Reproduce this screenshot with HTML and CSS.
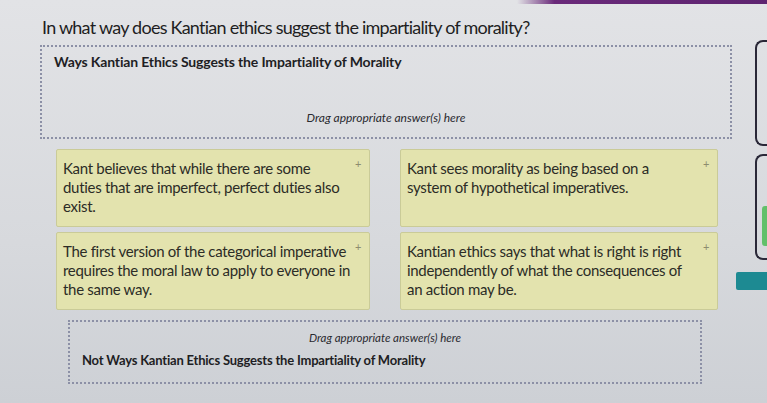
FILE: index.html
```html
<!DOCTYPE html>
<html lang="en">
<head>
  <meta charset="UTF-8" />
  <meta name="viewport" content="width=device-width, initial-scale=1.0"/>
  <title>Kantian Ethics - Sort</title>
  <link rel="stylesheet" href="styles.css">
</head>
<body>
<div class="topbar"></div>

<div class="layout">
  <div class="main">
    <h1>In what way does Kantian ethics suggest the impartiality of morality?</h1>

    <div class="drop drop-top">
      <div class="drop-label">Ways Kantian Ethics Suggests the Impartiality of Morality</div>
      <div class="drop-hint">Drag appropriate answer(s) here</div>
    </div>

    <div class="cards">
      <div class="card">Kant believes that while there are some<br>duties that are imperfect, perfect duties also<br>exist.<span class="plus">+</span></div>
      <div class="card">Kant sees morality as being based on a<br>system of hypothetical imperatives.<span class="plus">+</span></div>
      <div class="card">The first version of the categorical imperative<br>requires the moral law to apply to everyone in<br>the same way.<span class="plus">+</span></div>
      <div class="card">Kantian ethics says that what is right is right<br>independently of what the consequences of<br>an action may be.<span class="plus">+</span></div>
    </div>

    <div class="drop drop-bottom">
      <div class="drop-hint">Drag appropriate answer(s) here</div>
      <div class="drop-label">Not Ways Kantian Ethics Suggests the Impartiality of Morality</div>
    </div>
  </div>

  <div class="side">
    <div class="side-box"></div>
    <div class="side-box"><div class="side-green"></div></div>
    <div class="side-btn"></div>
  </div>
</div>
</body>
</html>
```

FILE: styles.css
```css
body {
  margin: 0;
  font-family: Lato, 'Open Sans', sans-serif;
  background: linear-gradient(180deg, #e2e3e6 0%, #d7d9dd 60%, #cdd0d5 100%);
  color: #222;
  height: 403px;
  overflow: hidden;
}
.topbar {
  position: absolute;
  top: 0;
  right: 0;
  width: 250px;
  height: 4px;
  background: linear-gradient(90deg, rgba(106, 42, 122, 0) 0%, #6a2a7a 15%, #5e2470 100%);
}
.layout {
  display: flex;
}
.main {
  width: 736px;
  padding-left: 40px;
  box-sizing: border-box;
}
h1 {
  font-size: 18px;
  font-weight: 400;
  letter-spacing: -0.75px;
  margin: 16px 0 0 2px;
  color: #1e1e22;
}
.drop {
  border: 2px dotted #8c90a6;
  box-sizing: border-box;
  display: flex;
  flex-direction: column;
}
.drop-top {
  height: 94px;
  width: 692px;
  margin-top: 7px;
  padding: 6px 12px;
}
.drop-top .drop-hint {
  margin-top: auto;
  margin-bottom: 6px;
}
.drop-label {
  font-weight: 700;
  font-size: 14px;
  letter-spacing: -0.15px;
  color: #1e1e24;
}
.drop-hint {
  text-align: center;
  font-style: italic;
  font-size: 12px;
  color: #2a2a30;
}
.drop-bottom .drop-label {
  font-size: 13px;
  letter-spacing: -0.2px;
}
.drop-bottom .drop-hint {
  font-size: 11.5px;
}
.cards {
  display: grid;
  grid-template-columns: 314px 318px;
  column-gap: 30px;
  row-gap: 5px;
  margin: 10px 0 0 16px;
}
.card {
  position: relative;
  background: #e3e3ae;
  border: 1px solid #cacb98;
  border-radius: 2px;
  padding: 9px 8px 10px 6px;
  font-size: 15px;
  line-height: 19px;
  letter-spacing: -0.3px;
  color: #2c2c26;
  min-height: 57px;
}
.plus {
  position: absolute;
  top: 4px;
  right: 8px;
  font-size: 11px;
  color: #8d8c6e;
}
.drop-bottom {
  width: 634px;
  height: 64px;
  margin: 10px 0 0 28px;
  padding: 9px 12px 6px;
  gap: 8px;
}
.side {
  display: flex;
  flex-direction: column;
  flex: 1;
  padding-top: 40px;
}
.side-box {
  margin-left: 19px;
  height: 102px;
  border: 2px solid #2a2838;
  border-right: none;
  border-radius: 8px 0 0 8px;
  margin-bottom: 8px;
  position: relative;
}
.side-green {
  position: absolute;
  left: 5px;
  right: 0;
  top: 50px;
  height: 40px;
  background: #62c06a;
  border-radius: 3px 0 0 3px;
}
.side-btn {
  height: 18px;
  margin-top: 4px;
  background: #1d8a92;
  border-radius: 2px 0 0 2px;
}
```
